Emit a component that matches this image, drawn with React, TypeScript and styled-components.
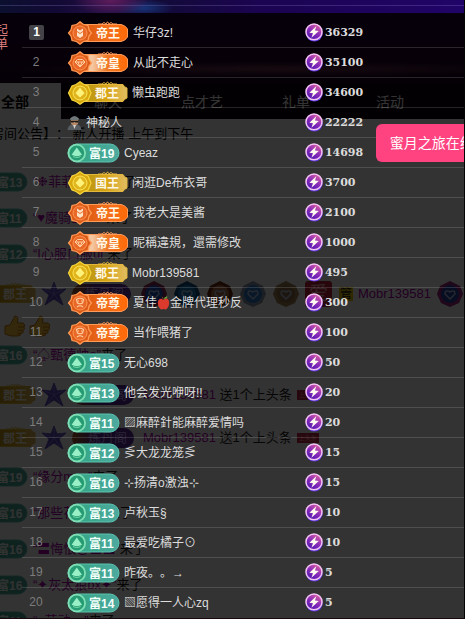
import React from "react";
import styled, { createGlobalStyle } from "styled-components";

const GlobalStyle = createGlobalStyle`
  * { box-sizing: border-box; }
  body {
    margin: 0;
    background: #000;
    font-family: "Liberation Sans", "Noto Sans CJK SC", sans-serif;
    font-size: 12px;
    line-height: 20px;
    text-spacing-trim: space-all;
  }
`;

type BadgeKind = "arrow" | "gem" | "face" | "gold" | "rich";

/* ---------- layers ---------- */

const Stage = styled.div`
  position: relative;
  overflow: hidden;
  border-right: 1px solid #050505;
  border-bottom: 1px solid #1a0810;
`;

const Banner = styled.header`
  height: 13px;
  background:
    linear-gradient(transparent 5px, rgba(150, 140, 220, 0.25) 5px, rgba(150, 140, 220, 0.25) 6px, transparent 6px),
    radial-gradient(ellipse 38px 16px at 24% 0, #5e1c5c, transparent),
    radial-gradient(ellipse 30px 9px at 31% 8px, #173377, transparent),
    linear-gradient(90deg, #0c1030, #120934 12%, #241046 24%, #120b38 34%, #1b0450 55%, #210468 100%);
`;

const Layers = styled.div`
  display: grid;
  > * { grid-area: 1 / 1; min-width: 0; }
`;

const Backdrop = styled.div`
  height: 0;
  min-height: 100%;
  overflow: hidden;
  background: #fff;
`;

const Hero = styled.div`
  height: 70px;
  background:
    radial-gradient(ellipse 60% 8px at 60% 56px, #6d3550, transparent),
    linear-gradient(#1d0038, #25002f 60%, #190020);
`;

const Shade = styled.div`
  background: rgba(0, 0, 0, 0.8);
`;

const Front = styled.div`
  display: grid;
  grid-template-columns: 22px minmax(0, 1fr);
  padding-top: 5px;
`;

const SideNote = styled.aside`
  display: flex;
  justify-content: flex-end;
  width: 8px;
  height: 34px;
  padding-top: 5px;
  overflow: hidden;
  color: #d87c7c;
  font-size: 13px;
  line-height: 14px;
  span { width: 13px; flex: none; }
`;

/* ---------- dimmed room page ---------- */

const Tabs = styled.nav`
  display: flex;
  height: 36px;
  background: #0a000c;
`;

const Tab = styled.button<{ $active?: boolean }>`
  flex: 0 0 ${(p) => (p.$active ? "61px" : "94px")};
  padding: ${(p) => (p.$active ? "0 0 0 1px" : "0")};
  border: 0;
  background: ${(p) => (p.$active ? "#fff" : "transparent")};
  color: ${(p) => (p.$active ? "#000" : "#fff")};
  font: ${(p) => (p.$active ? 700 : 400)} 14px "Liberation Sans", "Noto Sans CJK SC", sans-serif;
  text-align: ${(p) => (p.$active ? "left" : "center")};
`;

const Notice = styled.p`
  margin: 0 0 15px -9px;
  height: 30px;
  line-height: 30px;
  font-size: 13px;
  white-space: pre;
  color: #000;
`;

const Chat = styled.div`
  margin-left: -25px;
  font-size: 13px;
  white-space: nowrap;
`;

const Message = styled.div<{ $tall?: boolean }>`
  display: flex;
  align-items: center;
  gap: 5px;
  height: ${(p) => (p.$tall ? "43px" : "36px")};
  color: #222;
  b { font-weight: 400; color: #b000b0; }
  svg { flex: none; }
`;

const Thumbs = styled.div`
  display: flex;
  gap: 3px;
  height: 22px;
  margin-left: 29px;
`;

const Mod = styled.span`
  margin-left: 2px;
  padding: 0 1px;
  background: #e8c800;
  font-size: 12px;
  line-height: 14px;
`;

const Love = styled.span`
  padding: 0 4px;
  border-radius: 3px;
  background: #c0203c;
  color: #ffb0b8;
  font-size: 19px;
  line-height: 26px;
`;

const Guild = styled.span`
  width: 62px;
  margin-right: 4px;
  border-radius: 10px;
  background: linear-gradient(90deg, #b06020, #5a2a9c 40%);
  color: #c9a0ff;
  text-align: right;
  padding-right: 7px;
`;

const TopTag = styled.span`
  padding: 0 2px;
  background: #c02848;
  color: #ff9098;
  font-size: 6px;
  line-height: 10px;
`;

/* ---------- ranking ---------- */

const Ranking = styled.table`
  width: 100%;
  table-layout: fixed;
  border-collapse: separate;
  border-spacing: 0;
  color: #dcdcdc;
`;

const Row = styled.tr`
  height: 30px;
  td {
    padding: 0;
    border-bottom: 1px solid rgba(255, 255, 255, 0.14);
    vertical-align: middle;
    white-space: nowrap;
  }
  &:last-child td { border-bottom-color: transparent; }
`;

const RankCell = styled.td`
  width: 45px;
`;

const Rank = styled.span<{ $first: boolean }>`
  display: block;
  width: ${(p) => (p.$first ? "15px" : "28px")};
  margin-left: ${(p) => (p.$first ? "7px" : "0")};
  border-radius: 2px;
  background: ${(p) => (p.$first ? "#444448" : "transparent")};
  color: ${(p) => (p.$first ? "#fff" : "#7c7c7c")};
  font-weight: ${(p) => (p.$first ? 700 : 400)};
  line-height: 15px;
  text-align: center;
`;

const ScoreCell = styled.td`
  width: 36%;
`;

const Person = styled.div`
  display: flex;
  align-items: center;
  gap: 4px;
  height: 28px;
  > svg { flex: none; }
`;

const Name = styled.span`
  display: flex;
  align-items: center;
`;

const Score = styled.div`
  display: flex;
  align-items: center;
  gap: 2px;
  font: 700 11px "DejaVu Serif", serif;
`;

const Toast = styled.div`
  position: absolute;
  top: 124px;
  left: 81%;
  padding: 0 14px;
  border-radius: 6px;
  background: #ff4280;
  color: #fff;
  font-size: 14px;
  line-height: 38px;
  white-space: nowrap;
`;

/* ---------- drawings ---------- */

const badgeFont = '"Liberation Sans", "Noto Sans CJK SC", sans-serif';

function RichBadge({ label }: { label: string }) {
  return (
    <svg width="53" height="20" viewBox="0 0 53 20">
      <defs>
        <linearGradient id="rich" x2="1">
          <stop offset="0" stopColor="#2fa67e" />
          <stop offset="1" stopColor="#4da99f" />
        </linearGradient>
      </defs>
      <rect x="1" y="1" width="51" height="18" rx="9" fill="url(#rich)" stroke="#5cc4b0" />
      <circle cx="9.8" cy="10" r="8.3" fill="#279c74" stroke="#7fdfb4" strokeWidth="1.8" />
      <path d="M9.8 4.5 15 11.8Q9.8 14.6 4.6 11.8Z" fill="#9af0c6" />
      <path d="M6 13.6Q9.8 15.6 13.6 13.6" fill="none" stroke="#73d8a8" />
      <text x="22" y="14.5" fill="#f4fffb" fontFamily={badgeFont} fontWeight="700" fontSize="12">{label}</text>
    </svg>
  );
}

function NobleBadge({ kind, label }: { kind: BadgeKind; label: string }) {
  const gold = kind === "gold";
  const id = gold ? "noble-gold" : kind === "gem" ? "noble-gem" : "noble-orange";
  const stops = gold
    ? ["#c39a14", "#d9a414", "#e0bd62"]
    : kind === "gem"
      ? ["#f5c7a0", "#ef7a28", "#ff6a08"]
      : ["#e35f14", "#f4701c", "#ff6a08"];
  const rim = gold ? "#e2b73c" : "#ff9a58";
  return (
    <svg width={gold ? 61 : 62} height="24" viewBox={gold ? "0 0 61 24" : "0 0 62 24"}>
      <defs>
        <linearGradient id={id} x2="1">
          <stop offset="0.25" stopColor={stops[0]} />
          <stop offset="0.55" stopColor={stops[1]} />
          <stop offset="1" stopColor={stops[2]} />
        </linearGradient>
      </defs>
      <path
        d={gold
          ? "M14 3.5H56Q57 6 60 7V17Q57 18 56 20.5H14Z"
          : "M14 3.5H54Q58 4 60.5 8V16Q58 20 54 20.5H14Z"}
        fill={`url(#${id})`}
        stroke={rim}
      />
      <path d="M31 3 35 3 37 1.5 39 3 40.5 0.8 42 3 44 1.5 46 3H50" fill="none" stroke={rim} />
      <path
        d={gold
          ? "M13 0.8 17 3.5 21 5 24 12 21 19 17 20.5 13 23.2 9 20.5 5 19 1.5 12 5 5 9 3.5Z"
          : "M13 0.8 16.5 3.5 21 4.5 22 9 24.5 12 22 15 21 19.5 16.5 20.5 13 23.2 9.5 20.5 5 19.5 4 15 1.5 12 4 9 5 4.5 9.5 3.5Z"}
        fill={gold ? "#d8a80c" : "#dc5a18"}
        stroke={gold ? "#f5d640" : "#ff9c58"}
        strokeWidth="1.2"
      />
      <circle cx="13" cy="12" r="7" fill={gold ? "#e0b41c" : "#e8692a"} stroke={gold ? "#fbe65c" : "#ff9450"} />
      {kind === "arrow" && (
        <path d="M10 7.5 13 9.5 16 7.5V10L13 12 10 10ZM10 11 13 13 16 11V15L13 17 10 15Z" fill="#ffe3c4" />
      )}
      {kind === "gem" && (
        <path d="M10.5 8.5H15.5L18 11 13 16 8 11ZM8 11H18M11 11 13 16 15 11" fill="none" stroke="#ffd2a4" />
      )}
      {kind === "face" && (
        <g fill="none" stroke="#ffcf9f" strokeWidth="1.2">
          <path d="M9.5 8.5Q13 6 16.5 8.5L15.5 12Q13 13.5 10.5 12ZM10 16Q13 13.5 16 16" />
          <path d="M11 10H12M14 10H15" />
        </g>
      )}
      {gold && <path d="M13 6.5Q15 9.5 17.5 12 15.5 14.5 13 16.5 10.5 14.5 8.5 12 11 9.5 13 6.5Z" fill="#fff27a" />}
      <text x={gold ? 28 : 29} y="16.5" fill="#fff8e8" fontFamily={badgeFont} fontWeight="700" fontSize="12">{label}</text>
    </svg>
  );
}

function Badge({ kind, label }: { kind: BadgeKind; label: string }) {
  return kind === "rich" ? <RichBadge label={label} /> : <NobleBadge kind={kind} label={label} />;
}

function Coin() {
  return (
    <svg width="18" height="19" viewBox="0 0 18 19">
      <defs>
        <linearGradient id="coin" x1="0.8" y1="0" x2="0.2" y2="1">
          <stop offset="0" stopColor="#e0609c" />
          <stop offset="0.5" stopColor="#8a2cba" />
          <stop offset="1" stopColor="#4a16b0" />
        </linearGradient>
      </defs>
      <ellipse cx="9.3" cy="10.3" rx="8.4" ry="8.3" fill="#5a35dc" />
      <ellipse cx="9" cy="8.9" rx="8" ry="7.9" fill="url(#coin)" stroke="#f4c4f4" strokeWidth="1.5" />
      <path d="M11.4 3 4.4 9.8 8 10.2 6.4 14.8 13.8 8 10 7.6Z" fill="#fff8ee" />
    </svg>
  );
}

function Agent() {
  return (
    <svg width="15" height="15" viewBox="0 0 15 15">
      <path d="M0.5 15Q1 10 5 9.5H10Q14 10 14.5 15Z" fill="#565c60" />
      <circle cx="7.5" cy="6.8" r="3.8" fill="#b98a68" />
      <path d="M3 3.5Q7.5-1.5 12 3.5L11.5 5H3.5Z" fill="#70777b" />
      <path d="M3.5 5.8H11.5V7.6H8.4L7.5 6.8 6.6 7.6H3.5Z" fill="#17191b" />
      <path d="M6 10 7.5 14 9 10Z" fill="#d8d0c6" />
    </svg>
  );
}

function Apple() {
  return (
    <svg width="13" height="14" viewBox="0 0 13 14">
      <path d="M6.5 4Q10-0 12 5 13 10 9 13.5 6.5 12.5 4 13.5 0 10 1 5 3 1 6.5 4Z" fill="#dc3a2c" />
      <path d="M6.5 4Q6 2 5 0.8" fill="none" stroke="#704020" />
      <path d="M6.5 3Q8 0 10.5 0.5 10 3 6.5 3Z" fill="#65a83c" />
    </svg>
  );
}

function Thumb() {
  return (
    <svg width="22" height="22" viewBox="0 0 22 22">
      <path d="M1 11 6 10 11 1Q15 1 13.5 8H19Q22 10 20 12 21.5 14 19 15.5 20 18 17 18.5 17 21 13 21H7L1 19Z" fill="#ffc83d" stroke="#c67a10" />
      <path d="M14 12H20M14 15.3H19M13 18.3H17" stroke="#c67a10" />
    </svg>
  );
}

function Flower() {
  return (
    <svg width="26" height="26" viewBox="0 0 26 26">
      <path d="M13 1 16 9 25 8 18 14 22 24 13 18 4 24 8 14 1 8 10 9Z" fill="#5848b8" stroke="#6858c8" />
      <path d="M13 13V4M13 13 22 9M13 13 19 21M13 13 7 21M13 13 4 9" stroke="#8c7ce8" />
    </svg>
  );
}

function Medal({ fill, rim }: { fill: string; rim: string }) {
  return (
    <svg width="28" height="28" viewBox="0 0 28 28">
      <path d="M14 1 24 6 27 14 23 23 14 27 5 23 1 14 4 6Z" fill={rim} />
      <circle cx="14" cy="14" r="9" fill={fill} />
      <path d="M14 19 9 14Q9 9 14 12 19 9 19 14Z" fill="none" stroke="#b8c8e8" strokeWidth="1.5" />
    </svg>
  );
}

/* ---------- content ---------- */

interface Entry {
  kind?: BadgeKind;
  label?: string;
  name: React.ReactNode;
  score: number;
}

const entries: Entry[] = [
  { kind: "arrow", label: "帝王", name: "华仔3z!", score: 36329 },
  { kind: "gem", label: "帝皇", name: "从此不走心", score: 35100 },
  { kind: "gold", label: "郡王", name: "懒虫跑跑", score: 34600 },
  { name: "神秘人", score: 22222 },
  { kind: "rich", label: "富19", name: "Cyeaz", score: 14698 },
  { kind: "gold", label: "国王", name: "闲逛De布衣哥", score: 3700 },
  { kind: "arrow", label: "帝王", name: "我老大是美酱", score: 2100 },
  { kind: "gem", label: "帝皇", name: "昵稱違規，還需修改", score: 1000 },
  { kind: "gold", label: "郡王", name: "Mobr139581", score: 495 },
  { kind: "face", label: "帝尊", name: <>夏佳<Apple />金牌代理秒反</>, score: 300 },
  { kind: "face", label: "帝尊", name: "当作喂猪了", score: 100 },
  { kind: "rich", label: "富15", name: "无心698", score: 50 },
  { kind: "rich", label: "富13", name: "他会发光咿呀!!", score: 20 },
  { kind: "rich", label: "富11", name: "▨麻醉針能麻醉爱情吗", score: 20 },
  { kind: "rich", label: "富12", name: "⋚大龙龙笼⋚", score: 15 },
  { kind: "rich", label: "富16", name: "⊹扬清o激浊⊹", score: 15 },
  { kind: "rich", label: "富13", name: "卢秋玉§", score: 10 },
  { kind: "rich", label: "富11", name: "最爱吃橘子⊙", score: 10 },
  { kind: "rich", label: "富11", name: "昨夜。。→", score: 5 },
  { kind: "rich", label: "富14", name: "▧愿得一人心zq", score: 5 },
];

function Joined({ level, name }: { level: string; name: string }) {
  return (
    <Message>
      <RichBadge label={level} />
      <span><b>{name}</b>来了</span>
    </Message>
  );
}

function Headline() {
  return (
    <Message $tall>
      <NobleBadge kind="gold" label="郡王" />
      <Flower />
      <Guild>炼丹阁</Guild>
      <span><b>Mobr139581</b> 送1个上头条</span>
      <TopTag>上头条</TopTag>
    </Message>
  );
}

export default function App() {
  return (
    <>
      <GlobalStyle />
      <Stage>
        <Banner />
        <Layers>
          <Backdrop>
            <Hero />
            <Tabs>
              <Tab $active>全部</Tab>
              <Tab>聊天</Tab>
              <Tab>点才艺</Tab>
              <Tab>礼单</Tab>
              <Tab>活动</Tab>
            </Tabs>
            <Notice>房间公告】： 新人开播 上午到下午</Notice>
            <Chat>
              <Joined level="富13" name="“❉菲菲儿o❉”" />
              <Joined level="富11" name="“♥魔骑士mo”" />
              <Joined level="富12" name="“I心服口服ui”" />
              <Message $tall>
                <NobleBadge kind="gold" label="郡王" />
                <Flower />
                <Guild>炼丹阁</Guild>
                <Medal fill="#2050c0" rim="#902858" />
                <Medal fill="#1878b8" rim="#105080" />
                <Medal fill="#b07048" rim="#702810" />
                <Medal fill="#2878c8" rim="#8898a8" />
                <Medal fill="#907048" rim="#a08050" />
                <Love>爱</Love>
                <Mod>管</Mod>
                <b>Mobr139581</b>
                <Medal fill="#2848a8" rim="#a02880" />
              </Message>
              <Thumbs>
                <Thumb />
                <Thumb />
              </Thumbs>
              <Joined level="富16" name="“♤甄德帅o”" />
              <Headline />
              <Headline />
              <Joined level="富19" name="“缘分mox”" />
              <Joined level="富16" name="“那些花儿们”" />
              <Joined level="富16" name="“〓悔恨@〓〓”" />
              <Joined level="富16" name="“✦灰太狼bx✦”" />
              <Joined level="富11" name="“o萌动yo”" />
            </Chat>
          </Backdrop>
          <Shade />
          <Front>
            <SideNote><span>起单</span></SideNote>
            <Ranking>
              <tbody>
                {entries.map((e, i) => (
                  <Row key={i}>
                    <RankCell><Rank $first={i === 0}>{i + 1}</Rank></RankCell>
                    <td>
                      <Person>
                        {e.kind ? <Badge kind={e.kind} label={e.label ?? ""} /> : <Agent />}
                        <Name>{e.name}</Name>
                      </Person>
                    </td>
                    <ScoreCell><Score><Coin />{e.score}</Score></ScoreCell>
                  </Row>
                ))}
              </tbody>
            </Ranking>
          </Front>
        </Layers>
        <Toast>蜜月之旅在线等</Toast>
      </Stage>
    </>
  );
}
